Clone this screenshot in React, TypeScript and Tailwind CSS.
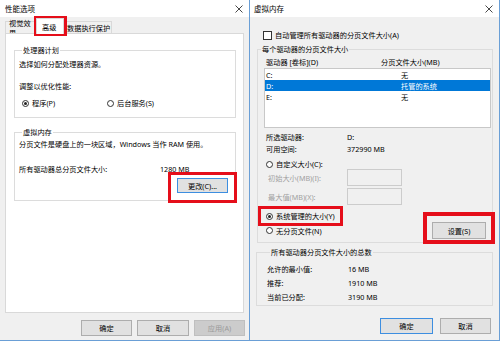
import { FC, ReactNode } from 'react';

const font = { fontFamily: '"Noto Sans", "Noto Sans CJK SC", sans-serif' };

const CloseIcon: FC = () => (
  <svg width="8" height="8" viewBox="0 0 8 8" className="text-[#333]">
    <path d="M0.5 0.5L7.5 7.5M7.5 0.5L0.5 7.5" stroke="currentColor" strokeWidth="0.9" />
  </svg>
);

const TitleBar: FC<{ title: string; className?: string }> = ({ title, className }) => (
  <div className={`flex h-[17px] shrink-0 items-center justify-between bg-white ${className ?? ''}`}>
    <span className="text-[7.5px] leading-[10px]">{title}</span>
    <CloseIcon />
  </div>
);

const Radio: FC<{ checked?: boolean; label: string }> = ({ checked, label }) => (
  <div className="flex h-[10px] items-center gap-[3px] leading-[10px]">
    <span className="flex h-[7px] w-[7px] items-center justify-center rounded-full border border-[#333] bg-white">
      {checked && <span className="h-[3px] w-[3px] rounded-full bg-[#222]" />}
    </span>
    <span>{label}</span>
  </div>
);

const Btn: FC<{ w: string; children: ReactNode; primary?: boolean; disabled?: boolean }> = ({
  w,
  children,
  primary,
  disabled,
}) => (
  <div
    className={`flex h-[16px] items-center justify-center border leading-[10px] ${w} ${
      disabled
        ? 'border-[#bfbfbf] bg-[#cccccc] text-[#9a9a9a]'
        : primary
          ? 'border-[#3d8ee0] bg-[#e1e1e1]'
          : 'border-[#adadad] bg-[#e1e1e1]'
    }`}
  >
    {children}
  </div>
);

const Group: FC<{ legend: string; className?: string; children: ReactNode }> = ({
  legend,
  className,
  children,
}) => (
  <fieldset className={`border border-[#dcdcdc] ${className ?? ''}`}>
    <legend className="ml-[3px] px-[1px] leading-[10px]">{legend}</legend>
    {children}
  </fieldset>
);

const RedBox: FC<{ className: string }> = ({ className }) => (
  <div className={`pointer-events-none absolute border-[3px] border-[#e50e1a] ${className}`} />
);

const PerfWindow: FC = () => (
  <div className="flex h-[341px] w-[250px] shrink-0 flex-col border-r border-b border-[#6a9fd6] bg-[#f0f0f0]">
    <TitleBar title="性能选项" className="pl-[5px] pr-[6px]" />
    <div className="flex flex-1 flex-col pl-[5px]">
      <div className="flex h-[16px] items-end">
        <div className="flex h-[12px] w-[31px] items-center border border-b-0 border-[#d9d9d9] pl-[3px] leading-[10px]">
          视觉效果
        </div>
        <div className="relative z-10 -mb-px flex h-[16px] w-[28px] items-center border border-b-0 border-[#d9d9d9] bg-white pl-[5px] pt-[1px] leading-[10px]">
          高级
        </div>
        <div className="flex h-[12px] w-[48px] items-center border border-b-0 border-l-0 border-[#d9d9d9] pl-[3px] leading-[10px]">
          数据执行保护
        </div>
      </div>
      <div className="h-[280px] w-[239px] border border-[#d9d9d9] bg-white pl-[8px] pr-[7px] pt-[11px]">
        <Group legend="处理器计划" className="pb-[9px] pl-[4px]">
          <div className="mt-[4px] leading-[10px]">选择如何分配处理器资源。</div>
          <div className="mt-[12px] leading-[10px]">调整以优化性能:</div>
          <div className="mt-[7px] flex pl-[3px]">
            <div className="w-[85px]">
              <Radio checked label="程序(P)" />
            </div>
            <Radio label="后台服务(S)" />
          </div>
        </Group>
        <Group legend="虚拟内存" className="mt-[9px] pb-[7px] pl-[4px] pr-[7px]">
          <div className="mt-[2px] leading-[10px]">分页文件是硬盘上的一块区域，Windows 当作 RAM 使用。</div>
          <div className="mt-[15px] flex leading-[10px]">
            <span className="w-[141px]">所有驱动器总分页文件大小:</span>
            <span>1280 MB</span>
          </div>
          <div className="mt-[4px] flex justify-end">
            <div className="flex h-[15px] w-[51px] items-center justify-center border border-[#3d8ee0] bg-[#e1e1e1] leading-[10px]">
              更改(C)...
            </div>
          </div>
        </Group>
      </div>
      <div className="mt-[7px] flex gap-[5px] pl-[76px]">
        <Btn w="w-[51px]">确定</Btn>
        <Btn w="w-[52px]">取消</Btn>
        <Btn w="w-[51px]" disabled>
          应用(A)
        </Btn>
      </div>
    </div>
  </div>
);

const VmWindow: FC = () => (
  <div className="flex h-[341px] flex-1 flex-col border-r border-b border-[#6a9fd6] bg-[#f0f0f0]">
    <TitleBar title="虚拟内存" className="pl-[4px] pr-[6px]" />
    <div className="flex flex-1 flex-col">
      <div className="mt-[13px] flex h-[10px] items-center gap-[3px] pl-[13px] leading-[10px]">
        <span className="h-[9px] w-[9px] border border-[#333] bg-white" />
        <span>自动管理所有驱动器的分页文件大小(A)</span>
      </div>
      <Group legend="每个驱动器的分页文件大小" className="mt-[4px] ml-[7px] w-[236px] pb-[3px]">
        <div className="mt-[3px] flex pl-[8px] leading-[10px]">
          <span className="w-[115px]">驱动器 [卷标](D)</span>
          <span>分页文件大小(MB)</span>
        </div>
        <div className="ml-[6px] mt-[1px] h-[60px] w-[227px] border border-[#c8c8c8] bg-white">
          {[
            ['C:', '无', false],
            ['D:', '托管的系统', true],
            ['E:', '无', false],
          ].map(([d, v, sel]) => (
            <div
              key={d as string}
              className={`flex h-[11px] items-center pl-[1px] leading-[10px] ${sel ? 'bg-[#0078d7] text-white' : ''}`}
            >
              <span className="w-[135px]">{d}</span>
              <span>{v}</span>
            </div>
          ))}
        </div>
        <div className="mt-[4px] flex pl-[8px] leading-[10px]">
          <span className="w-[81px]">所选驱动器:</span>
          <span>D:</span>
        </div>
        <div className="mt-[2px] flex pl-[8px] leading-[10px]">
          <span className="w-[81px]">可用空间:</span>
          <span>372990 MB</span>
        </div>
        <div className="mt-[5px] pl-[8px]">
          <Radio label="自定义大小(C):" />
        </div>
        <div className="flex items-center pl-[10px] leading-[10px] text-[#a0a0a0]">
          <span className="w-[79px]">初始大小(MB)(I):</span>
          <span className="h-[17px] w-[55px] border border-[#cccccc] bg-[#f0f0f0]" />
        </div>
        <div className="mt-[2px] flex items-center pl-[10px] leading-[10px] text-[#a0a0a0]">
          <span className="w-[79px]">最大值(MB)(X):</span>
          <span className="h-[17px] w-[55px] border border-[#cccccc] bg-[#f0f0f0]" />
        </div>
        <div className="mt-[6px] pl-[8px]">
          <Radio checked label="系统管理的大小(Y)" />
        </div>
        <div className="mt-[1px] flex items-center justify-between pl-[8px] pr-[6px]">
          <Radio label="无分页文件(N)" />
          <div className="flex h-[17px] w-[54px] items-center justify-center border border-[#adadad] bg-[#e1e1e1] leading-[10px]">
            设置(S)
          </div>
        </div>
      </Group>
      <Group legend="所有驱动器分页文件大小的总数" className="mt-[4px] ml-[6px] w-[237px] pb-[3px] pl-[10px]">
        {[
          ['允许的最小值:', '16 MB'],
          ['推荐:', '1910 MB'],
          ['当前已分配:', '3190 MB'],
        ].map(([k, v], i) => (
          <div key={k} className={`flex leading-[10px] ${i === 0 ? 'mt-[7px]' : 'mt-[4px]'}`}>
            <span className="w-[81px]">{k}</span>
            <span>{v}</span>
          </div>
        ))}
      </Group>
      <div className="mt-[12px] flex justify-end gap-[7px] pr-[8px]">
        <Btn w="w-[53px]" primary>
          确定
        </Btn>
        <Btn w="w-[51px]">取消</Btn>
      </div>
    </div>
  </div>
);

export default function App() {
  return (
    <div className="relative flex h-[341px] w-[500px] overflow-hidden bg-white text-[7.2px] text-black" style={font}>
      <PerfWindow />
      <VmWindow />
      <RedBox className="left-[34px] top-[16px] h-[20px] w-[33px]" />
      <RedBox className="left-[168px] top-[172px] h-[31px] w-[69px]" />
      <RedBox className="left-[258px] top-[206px] h-[20px] w-[85px]" />
      <RedBox className="left-[423px] top-[212px] h-[32px] w-[72px] border-[4px]" />
    </div>
  );
}
